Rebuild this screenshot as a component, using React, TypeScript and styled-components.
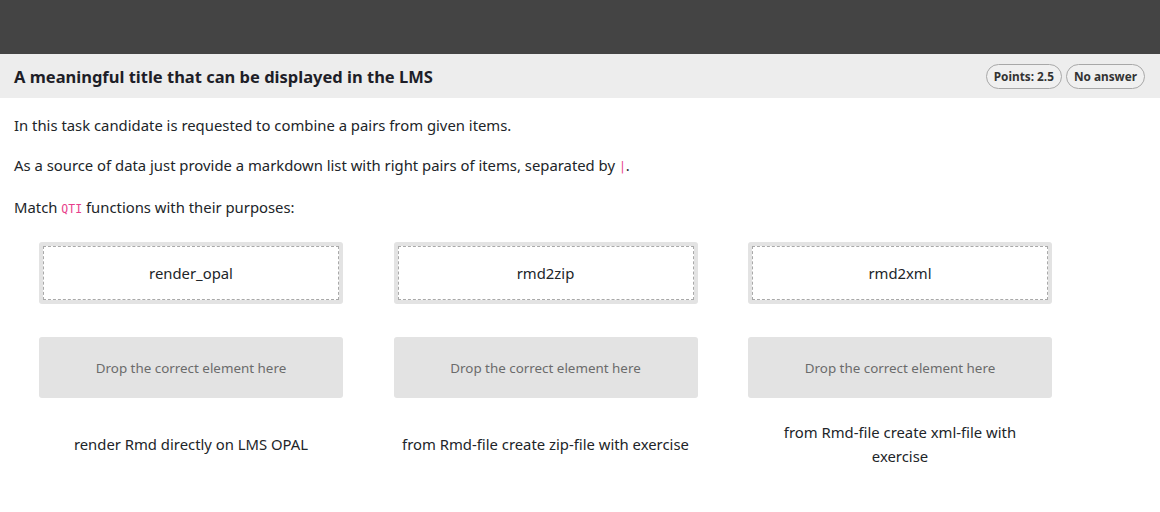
import React from 'react';
import styled, { createGlobalStyle } from 'styled-components';

const GlobalStyle = createGlobalStyle`
  html, body {
    margin: 0;
    padding: 0;
    background: #fff;
  }
  body {
    font-family: "Noto Sans", "Open Sans", sans-serif;
    color: #212529;
  }
`;

const TopBar = styled.div`
  height: 54px;
  background: #444444;
`;

const Header = styled.div`
  height: 44px;
  background: #ededed;
  display: flex;
  align-items: center;
  justify-content: space-between;
  padding: 0 15px 0 14px;
`;

const Title = styled.h1`
  margin: 0;
  font-size: 16.5px;
  font-weight: 700;
  color: #1e1e28;
`;

const Badges = styled.div`
  display: flex;
  gap: 4px;
`;

const Badge = styled.span`
  display: inline-flex;
  align-items: center;
  height: 23px;
  padding: 0 7px;
  border: 1px solid #a8a8a8;
  border-radius: 13px;
  font-size: 11.8px;
  font-weight: 700;
  color: #333;
  background: #f0f0f0;
`;

const Body = styled.div`
  padding: 17px 14px 0;
`;

const Paragraph = styled.p`
  margin: 0 0 19px;
  font-size: 14.85px;
  line-height: 21px;
  color: #212529;
`;

const Code = styled.code`
  font-family: "DejaVu Sans Mono", "Liberation Mono", monospace;
  font-size: 11.5px;
  color: #e83e8c;
`;

const Grid = styled.div`
  display: grid;
  grid-template-columns: repeat(3, 304px);
  column-gap: 50.5px;
  padding: 3px 0 0 39px;
`;

const Column = styled.div`
  display: flex;
  flex-direction: column;
  align-items: stretch;
`;

const DragHolder = styled.div`
  height: 62px;
  background: #e3e3e3;
  border-radius: 3px;
  padding: 4px;
  box-sizing: border-box;
`;

const DragItem = styled.div`
  height: 100%;
  box-sizing: border-box;
  background: #fff;
  border: 1px dashed #a9a9a9;
  display: flex;
  align-items: center;
  justify-content: center;
  font-size: 14.85px;
  color: #212529;
`;

const DropZone = styled.div`
  margin-top: 33px;
  height: 61px;
  background: #e3e3e3;
  border-radius: 3px;
  display: flex;
  align-items: center;
  justify-content: center;
  font-size: 13.4px;
  color: #6b6b6b;
`;

const Purpose = styled.div<{ $inset: number }>`
  height: 92px;
  display: flex;
  align-items: center;
  justify-content: center;
  text-align: center;
  font-size: 14.85px;
  line-height: 24px;
  padding: 0 ${(p) => p.$inset}px;
  color: #212529;
`;

const pairs = [
  { fn: 'render_opal', purpose: 'render Rmd directly on LMS OPAL', inset: 6 },
  { fn: 'rmd2zip', purpose: 'from Rmd-file create zip-file with exercise', inset: 6 },
  { fn: 'rmd2xml', purpose: 'from Rmd-file create xml-file with exercise', inset: 30 },
];

const App: React.FC = () => {
  return (
    <>
      <GlobalStyle />
      <TopBar />
      <Header>
        <Title>A meaningful title that can be displayed in the LMS</Title>
        <Badges>
          <Badge>Points: 2.5</Badge>
          <Badge>No answer</Badge>
        </Badges>
      </Header>
      <Body>
        <Paragraph>In this task candidate is requested to combine a pairs from given items.</Paragraph>
        <Paragraph>
          As a source of data just provide a markdown list with right pairs of items, separated by <Code>|</Code>.
        </Paragraph>
        <Paragraph>
          Match <Code>QTI</Code> functions with their purposes:
        </Paragraph>
      </Body>
      <Grid>
        {pairs.map((p) => (
          <Column key={p.fn}>
            <DragHolder>
              <DragItem>{p.fn}</DragItem>
            </DragHolder>
            <DropZone>Drop the correct element here</DropZone>
            <Purpose $inset={p.inset}>{p.purpose}</Purpose>
          </Column>
        ))}
      </Grid>
    </>
  );
};

export default App;
